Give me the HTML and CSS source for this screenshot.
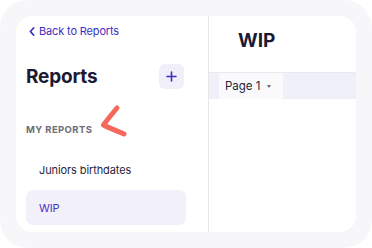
FILE: index.html
```html
<!DOCTYPE html>
<html>
<head>
<meta charset="utf-8">
<link rel="stylesheet" href="styles.css">
</head>
<body>
<div class="frame">
  <div class="panel">
    <aside class="sidebar">
      <a class="back" href="#">
        <svg class="chev" width="6" height="9" viewBox="0 0 6 9"><path d="M4.6 1 L1.4 4.5 L4.6 8" fill="none" stroke="#3d2fbf" stroke-width="1.8" stroke-linecap="round" stroke-linejoin="round"/></svg>
        <span>Back to Reports</span>
      </a>
      <div class="head">
        <h1 class="title">Reports</h1>
        <button class="add">
          <svg width="11" height="11" viewBox="0 0 11 11"><path d="M5.5 1 V10 M1 5.5 H10" stroke="#3d2fbf" stroke-width="1.6" stroke-linecap="round"/></svg>
        </button>
      </div>
      <div class="label">MY REPORTS</div>
      <ul class="list">
        <li class="item">Juniors birthdates</li>
        <li class="item active">WIP</li>
      </ul>
      <svg class="mark" width="34" height="36" viewBox="0 0 34 36"><path d="M21 4 C16 10 11 16 7.5 21 C13 24 21 27 28 30" fill="none" stroke="#f6675c" stroke-width="5" stroke-linecap="round" stroke-linejoin="round"/></svg>
    </aside>
    <main class="main">
      <h2 class="page-title">WIP</h2>
      <div class="tabs">
        <div class="tab">Page 1 <span class="caret"></span></div>
      </div>
    </main>
  </div>
</div>
</body>
</html>
```

FILE: styles.css
```css
* { box-sizing: border-box; }
html, body { margin: 0; padding: 0; background: #ffffff; }
body { font-family: Inter, "Noto Sans", sans-serif; }
.frame {
  width: 372px;
  height: 248px;
  background: #f7f7f9;
  border-radius: 28px;
  padding: 16px;
}
.panel {
  width: 100%;
  height: 100%;
  background: #ffffff;
  border-radius: 16px;
  display: flex;
  overflow: hidden;
}
.sidebar {
  position: relative;
  width: 193px;
  flex: none;
  border-right: 1px solid #e6e6eb;
  padding: 7px 22px 0 10px;
  display: flex;
  flex-direction: column;
}
.back {
  display: flex;
  align-items: center;
  height: 16px;
  color: #3d2fbf;
  font-size: 11px;
  letter-spacing: -0.15px;
  text-decoration: none;
  gap: 4px;
}
.chev { margin-left: 3px; }
.head {
  margin-top: 25px;
  height: 25px;
  display: flex;
  align-items: center;
  justify-content: space-between;
}
.title {
  margin: 0;
  font-size: 19px;
  font-weight: 700;
  color: #1c1a33;
  letter-spacing: -0.2px;
}
.add {
  width: 25px;
  height: 25px;
  margin-right: 2px;
  border: none;
  border-radius: 6px;
  background: #f1f0fa;
  display: flex;
  align-items: center;
  justify-content: center;
  padding: 0;
}
.label {
  margin-top: 35px;
  height: 12px;
  line-height: 12px;
  font-size: 9.5px;
  font-weight: 700;
  letter-spacing: 0.4px;
  color: #6e6d76;
}
.list {
  list-style: none;
  margin: 16px 0 0 0;
  padding: 0;
  display: flex;
  flex-direction: column;
  gap: 3px;
}
.item {
  height: 35px;
  display: flex;
  align-items: center;
  padding-left: 13px;
  font-size: 11px;
  letter-spacing: -0.1px;
  color: #29263d;
  border-radius: 7px;
}
.item.active {
  background: #f2f0fb;
  color: #4a33c2;
}
.mark {
  position: absolute;
  left: 80px;
  top: 88px;
}
.main {
  flex: 1;
  display: flex;
  flex-direction: column;
}
.page-title {
  margin: 13px 0 0 29px;
  height: 24px;
  line-height: 24px;
  font-size: 19px;
  font-weight: 700;
  color: #1c1a33;
}
.tabs {
  margin-top: 19px;
  height: 27px;
  background: #f0f0f8;
  border-top: 1px solid #e9e9f0;
  padding-left: 10px;
  display: flex;
}
.tab {
  width: 64px;
  background: #fafafc;
  display: flex;
  align-items: center;
  padding-left: 6px;
  font-size: 11.5px;
  color: #1f1d33;
  gap: 5px;
}
.caret {
  width: 0;
  height: 0;
  border-left: 2.5px solid transparent;
  border-right: 2.5px solid transparent;
  border-top: 3px solid #6b6a75;
  margin-left: 2px;
}
```
